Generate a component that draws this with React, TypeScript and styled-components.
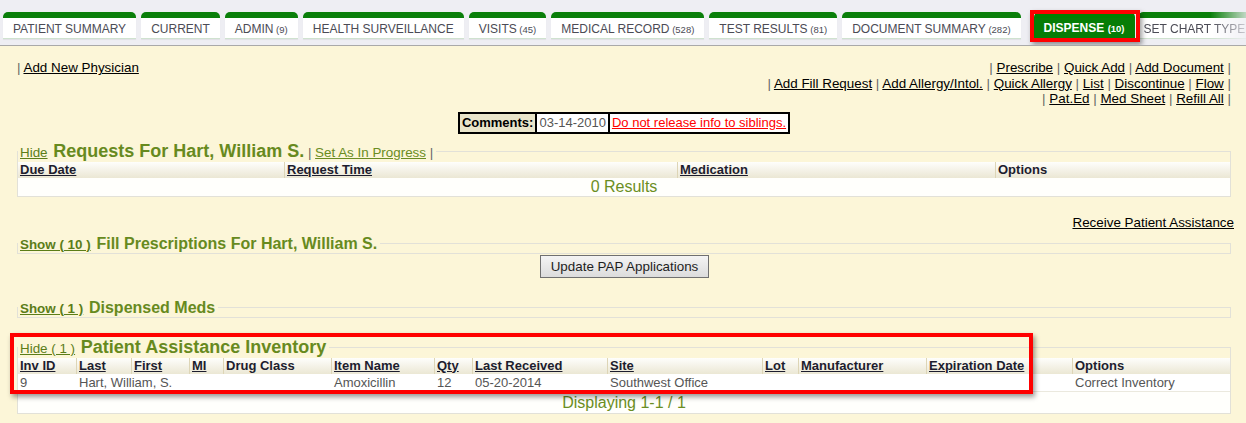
import React from 'react';
import styled, { createGlobalStyle } from 'styled-components';

const Global = createGlobalStyle`
  html, body { margin: 0; padding: 0; }
  body {
    background: #fcf6d8;
    font-family: "Liberation Sans", Arial, sans-serif;
    font-size: 13px;
    color: #111;
    overflow: hidden;
  }
`;

const Page = styled.div`
  width: 1246px;
  min-height: 423px;
  background: #fcf6d8;
`;

const TabBar = styled.div`
  display: flex;
  align-items: flex-start;
  gap: 5px;
  height: 46px;
  box-sizing: border-box;
  padding: 12px 0 0 3px;
  background: #eeeef3;
  border-bottom: 1px solid #a9a9a9;
  overflow: hidden;
  white-space: nowrap;
`;

const Tab = styled.div<{ $fade?: boolean }>`
  flex: none;
  height: 20px;
  padding: 0 10px;
  border-top: 6px solid #0a7f0a;
  border-bottom: 1px solid #cfe2cf;
  border-radius: 5px 5px 0 0;
  background: #fff;
  box-shadow: 0 1px 1px rgba(0, 0, 0, 0.06);
  font-size: 12px;
  line-height: 22px;
  color: #4b4b55;
  text-transform: uppercase;
  ${(p) =>
    p.$fade &&
    `
    padding-left: 6px;
    -webkit-mask-image: linear-gradient(to right, #000 62%, transparent 100%);
    mask-image: linear-gradient(to right, #000 62%, transparent 100%);
  `}
`;

const ActiveTab = styled.div`
  flex: none;
  position: relative;
  z-index: 1;
  height: 26px;
  box-sizing: border-box;
  margin: 0 -2px 0 8px;
  padding: 6px 10px 0;
  border-radius: 5px 5px 0 0;
  background: linear-gradient(#008000 0, #008000 6px, #067d06 6px);
  font-size: 12px;
  line-height: 21px;
  font-weight: bold;
  color: #fff;
`;

const Count = styled.span`
  font-size: 9.5px;
`;

const Highlight = styled.div<{ $top: number; $left: number; $w: number; $h: number }>`
  position: absolute;
  top: ${(p) => p.$top}px;
  left: ${(p) => p.$left}px;
  width: ${(p) => p.$w}px;
  height: ${(p) => p.$h}px;
  box-sizing: border-box;
  border: 4px solid #ff0000;
  box-shadow: 2px 3px 5px rgba(0, 0, 0, 0.4);
  pointer-events: none;
`;

const Content = styled.div`
  padding: 14px 15px 0 17px;
`;

const TopLinks = styled.div`
  display: flex;
  justify-content: space-between;
  align-items: flex-start;
  font-size: 13.4px;
  line-height: 15.5px;
`;

const RightLinks = styled.div`
  text-align: right;
`;

const Sep = styled.span`
  color: #666;
`;

const Link = styled.a`
  color: #000;
  text-decoration: underline;
  cursor: pointer;
`;

const CommentsRow = styled.div`
  display: flex;
  justify-content: center;
  margin-top: 5px;
`;

const CommentBox = styled.div`
  display: flex;
  border: 2px solid #000;
  height: 18px;
  font-size: 13px;
  line-height: 18px;
`;

const CommentCell = styled.div<{ $variant: 'label' | 'date' | 'note' }>`
  padding: 0 2px;
  background: ${(p) => (p.$variant === 'label' ? '#e9e5ca' : '#fff')};
  font-weight: ${(p) => (p.$variant === 'label' ? 'bold' : 'normal')};
  color: ${(p) => (p.$variant === 'date' ? '#555' : '#000')};
  & + & {
    border-left: 2px solid #000;
  }
`;

const NoteLink = styled.a`
  color: #ff0000;
  text-decoration: underline;
`;

const SectionWrap = styled.div<{ $gap: number }>`
  position: relative;
  margin-top: ${(p) => p.$gap}px;
`;

const Section = styled.fieldset`
  margin: 0;
  padding: 0;
  min-width: 0;
  border: 1px solid #e2e1d8;
`;

const Legend = styled.legend<{ $size: number }>`
  margin: 0;
  padding: 0 3px 0 2px;
  white-space: nowrap;
  line-height: ${(p) => p.$size + 1}px;
  font-size: 13.4px;
  color: #666;
`;

const Toggle = styled.a<{ $bold?: boolean }>`
  margin-right: 2px;
  font-size: 13.4px;
  font-weight: ${(p) => (p.$bold ? 'bold' : 'normal')};
  color: #5b7d18;
  text-decoration: underline;
  cursor: pointer;
`;

const Title = styled.span<{ $size: number }>`
  font-size: ${(p) => p.$size}px;
  font-weight: bold;
  color: #678a1e;
`;

const GreenLink = styled.a`
  color: #6a8c22;
  text-decoration: underline;
  cursor: pointer;
`;

const HeadRow = styled.div<{ $cols: string }>`
  display: grid;
  grid-template-columns: ${(p) => p.$cols};
  height: 16px;
  background: linear-gradient(#fefefc, #ebe7d4);
`;

const HeadCell = styled.div<{ $plain?: boolean }>`
  padding-left: 2px;
  font-size: 13px;
  font-weight: bold;
  line-height: 16px;
  color: #1d1d2e;
  text-decoration: ${(p) => (p.$plain ? 'none' : 'underline')};
  white-space: nowrap;
  overflow: hidden;
  & + & {
    border-left: 1px solid #ddd5b6;
  }
`;

const DataRow = styled.div<{ $cols: string }>`
  display: grid;
  grid-template-columns: ${(p) => p.$cols};
  height: 17px;
  background: #fff;
  border-bottom: 1px solid #ebe9de;
`;

const DataCell = styled.div`
  padding-left: 2px;
  font-size: 13px;
  line-height: 17px;
  color: #555;
  white-space: nowrap;
  & + & {
    padding-left: 3px;
  }
`;

const StatusRow = styled.div<{ $h: number }>`
  height: ${(p) => p.$h}px;
  background: #fffffc;
  text-align: center;
  font-size: 16px;
  line-height: ${(p) => p.$h}px;
  color: #6b8e23;
`;

const RightRow = styled.div`
  margin-top: 18px;
  margin-right: -3px;
  text-align: right;
  font-size: 13.4px;
  line-height: 16px;
`;

const ButtonRow = styled.div`
  display: flex;
  justify-content: center;
  margin-top: 1px;
  padding-left: 1px;
`;

const Button = styled.button`
  height: 23px;
  padding: 0 10px;
  border: 1px solid #707070;
  border-radius: 0;
  background: linear-gradient(#f4f4f4, #dcdcdc);
  font-family: "Liberation Sans", Arial, sans-serif;
  font-size: 13.4px;
  color: #1e1e1e;
`;

const Piped: React.FC<{ items: string[]; lead?: boolean; tail?: boolean }> = ({ items, lead = true, tail = true }) => (
  <>
    {lead && <Sep>| </Sep>}
    {items.map((it, i) => (
      <React.Fragment key={it}>
        <Link>{it}</Link>
        {(i < items.length - 1 || tail) && <Sep> |{i < items.length - 1 ? ' ' : ''}</Sep>}
      </React.Fragment>
    ))}
  </>
);

const tabs: { label: string; count?: number }[] = [
  { label: 'Patient Summary' },
  { label: 'Current' },
  { label: 'Admin', count: 9 },
  { label: 'Health Surveillance' },
  { label: 'Visits', count: 45 },
  { label: 'Medical Record', count: 528 },
  { label: 'Test Results', count: 81 },
  { label: 'Document Summary', count: 282 },
];

const reqCols = '266px 393px 318px 1fr';
const invCols = '58px 55px 58px 34px 108px 103px 38px 135px 155px 36px 128px 146px 1fr';

const invHead: { t: string; plain?: boolean }[] = [
  { t: 'Inv ID' },
  { t: 'Last' },
  { t: 'First' },
  { t: 'MI' },
  { t: 'Drug Class', plain: true },
  { t: 'Item Name' },
  { t: 'Qty' },
  { t: 'Last Received' },
  { t: 'Site' },
  { t: 'Lot' },
  { t: 'Manufacturer' },
  { t: 'Expiration Date' },
  { t: 'Options', plain: true },
];

const invData = ['9', 'Hart, William, S.', '', '', '', 'Amoxicillin', '12', '05-20-2014', 'Southwest Office', '', '', '', 'Correct Inventory'];

export default function App() {
  return (
    <Page>
      <Global />
      <TabBar>
        {tabs.map((t) => (
          <Tab key={t.label}>
            {t.label}
            {t.count !== undefined && <Count> ({t.count})</Count>}
          </Tab>
        ))}
        <ActiveTab>
          DISPENSE <Count>(10)</Count>
          <Highlight $top={-2} $left={-4} $w={110} $h={32} />
        </ActiveTab>
        <Tab $fade>Set Chart Type</Tab>
      </TabBar>

      <Content>
        <TopLinks>
          <div>
            <Piped items={['Add New Physician']} tail={false} />
          </div>
          <RightLinks>
            <div>
              <Piped items={['Prescribe', 'Quick Add', 'Add Document']} />
            </div>
            <div>
              <Piped items={['Add Fill Request', 'Add Allergy/Intol.', 'Quick Allergy', 'List', 'Discontinue', 'Flow']} />
            </div>
            <div>
              <Piped items={['Pat.Ed', 'Med Sheet', 'Refill All']} />
            </div>
          </RightLinks>
        </TopLinks>

        <CommentsRow>
          <CommentBox>
            <CommentCell $variant="label">Comments:</CommentCell>
            <CommentCell $variant="date">03-14-2010</CommentCell>
            <CommentCell $variant="note">
              <NoteLink>Do not release info to siblings.</NoteLink>
            </CommentCell>
          </CommentBox>
        </CommentsRow>

        <SectionWrap $gap={8}>
          <Section>
            <Legend $size={18}>
              <Toggle>Hide</Toggle> <Title $size={18}>Requests For Hart, William S.</Title> | <GreenLink>Set As In Progress</GreenLink> |
            </Legend>
            <HeadRow $cols={reqCols}>
              <HeadCell>Due Date</HeadCell>
              <HeadCell>Request Time</HeadCell>
              <HeadCell>Medication</HeadCell>
              <HeadCell $plain>Options</HeadCell>
            </HeadRow>
            <StatusRow $h={18}>0 Results</StatusRow>
          </Section>
        </SectionWrap>

        <RightRow>
          <Link>Receive Patient Assistance</Link>
        </RightRow>

        <SectionWrap $gap={4}>
          <Section>
            <Legend $size={16}>
              <Toggle $bold>Show ( 10 )</Toggle> <Title $size={16}>Fill Prescriptions For Hart, William S.</Title>
            </Legend>
          </Section>
        </SectionWrap>

        <ButtonRow>
          <Button>Update PAP Applications</Button>
        </ButtonRow>

        <SectionWrap $gap={21}>
          <Section>
            <Legend $size={16}>
              <Toggle $bold>Show ( 1 )</Toggle> <Title $size={16}>Dispensed Meds</Title>
            </Legend>
          </Section>
        </SectionWrap>

        <SectionWrap $gap={20}>
          <Section>
            <Legend $size={18}>
              <Toggle>Hide ( 1 )</Toggle> <Title $size={18}>Patient Assistance Inventory</Title>
            </Legend>
            <HeadRow $cols={invCols}>
              {invHead.map((h) => (
                <HeadCell key={h.t} $plain={h.plain}>
                  {h.t}
                </HeadCell>
              ))}
            </HeadRow>
            <DataRow $cols={invCols}>
              {invData.map((d, i) => (
                <DataCell key={i}>{d}</DataCell>
              ))}
            </DataRow>
            <StatusRow $h={21}>Displaying 1-1 / 1</StatusRow>
          </Section>
          <Highlight $top={-5} $left={-7} $w={1023} $h={61} />
        </SectionWrap>
      </Content>
    </Page>
  );
}
